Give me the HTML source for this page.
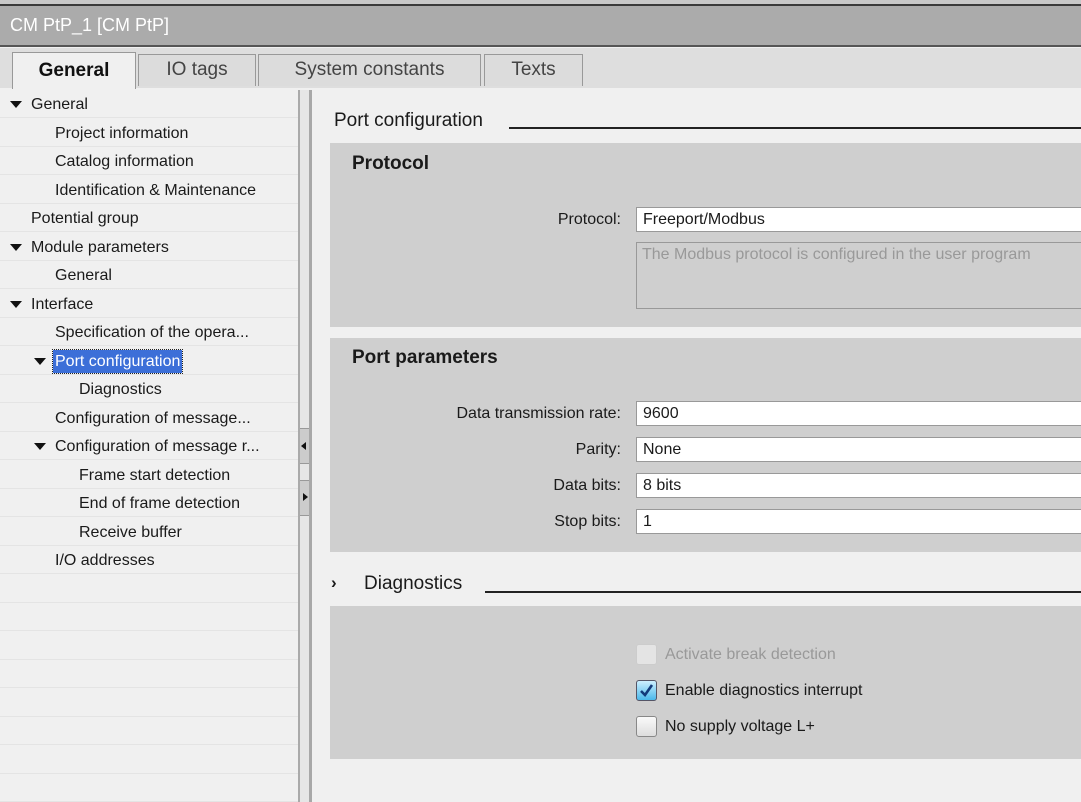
<!DOCTYPE html>
<html><head><style>
*{margin:0;padding:0;box-sizing:border-box}
body{width:1081px;height:802px;overflow:hidden;background:#f0f0f0;font-family:"Liberation Sans","DejaVu Sans",sans-serif;position:relative;color:#1a1a1a}
.a{position:absolute}
.row{position:absolute;left:0;width:298px;height:28px;border-bottom:1px solid #e4e4e4;font-size:16px;line-height:30px;white-space:nowrap}
.tri{display:inline-block;width:0;height:0;border-left:6px solid transparent;border-right:6px solid transparent;border-top:7px solid #111;vertical-align:middle;position:absolute;top:11px}
.tab{position:absolute;top:54px;height:32px;border:1px solid #999;border-bottom:none;background:#dcdcdc;font-size:19px;line-height:30px;text-align:center;color:#444}
.lbl{position:absolute;font-size:16px;text-align:right;width:300px;left:321px}
.inp{position:absolute;left:636px;width:460px;height:25px;background:#fff;border:1px solid #999;font-size:16px;line-height:24px;padding-left:6px}
.cb{position:absolute;left:636px;width:21px;height:21px;border:1px solid #888;border-radius:3px;background:linear-gradient(#fafafa,#ddd)}
.ct{position:absolute;left:665px;font-size:16px}
</style></head><body>
<div class="a" style="left:0;top:0;width:1081px;height:6px;background:#c8c8c8;border-bottom:2px solid #3a3a3a"></div>
<div class="a" style="left:0;top:6px;width:1081px;height:41px;background:#ababab;border-bottom:2px solid #555"></div>
<div class="a" style="left:10px;top:15px;font-size:18px;color:#fff">CM PtP_1 [CM PtP]</div>
<div class="a" style="left:0;top:48px;width:1081px;height:40px;background:#dedede"></div>
<div class="tab" style="left:12px;width:124px;top:52px;height:37px;background:#f0f0f0;color:#111;font-weight:bold;line-height:35px">General</div>
<div class="tab" style="left:138px;width:118px">IO tags</div>
<div class="tab" style="left:258px;width:223px">System constants</div>
<div class="tab" style="left:484px;width:99px">Texts</div>

<div class="row" style="top:90px"><span class="tri" style="left:10px"></span><span style="position:absolute;left:31px">General</span></div>
<div class="row" style="top:118.5px"><span style="position:absolute;left:55px">Project information</span></div>
<div class="row" style="top:147px"><span style="position:absolute;left:55px">Catalog information</span></div>
<div class="row" style="top:175.5px"><span style="position:absolute;left:55px">Identification &amp; Maintenance</span></div>
<div class="row" style="top:204px"><span style="position:absolute;left:31px">Potential group</span></div>
<div class="row" style="top:232.5px"><span class="tri" style="left:10px"></span><span style="position:absolute;left:31px">Module parameters</span></div>
<div class="row" style="top:261px"><span style="position:absolute;left:55px">General</span></div>
<div class="row" style="top:289.5px"><span class="tri" style="left:10px"></span><span style="position:absolute;left:31px">Interface</span></div>
<div class="row" style="top:318px"><span style="position:absolute;left:55px">Specification of the opera...</span></div>
<div class="row" style="top:346.5px"><span class="tri" style="left:34px"></span><span style="position:absolute;left:53px;top:3px;height:23px;line-height:23px;padding:0 2px;background:#3c6fd8;color:#fff;outline:1px dotted #222">Port configuration</span></div>
<div class="row" style="top:375px"><span style="position:absolute;left:79px">Diagnostics</span></div>
<div class="row" style="top:403.5px"><span style="position:absolute;left:55px">Configuration of message...</span></div>
<div class="row" style="top:432px"><span class="tri" style="left:34px"></span><span style="position:absolute;left:55px">Configuration of message r...</span></div>
<div class="row" style="top:460.5px"><span style="position:absolute;left:79px">Frame start detection</span></div>
<div class="row" style="top:489px"><span style="position:absolute;left:79px">End of frame detection</span></div>
<div class="row" style="top:517.5px"><span style="position:absolute;left:79px">Receive buffer</span></div>
<div class="row" style="top:546px"><span style="position:absolute;left:55px">I/O addresses</span></div>
<div class="row" style="top:574.5px"></div><div class="row" style="top:603px"></div><div class="row" style="top:631.5px"></div><div class="row" style="top:660px"></div><div class="row" style="top:688.5px"></div><div class="row" style="top:717px"></div><div class="row" style="top:745.5px"></div><div class="row" style="top:774px"></div>

<div class="a" style="left:298px;top:90px;width:2px;height:712px;background:#aaa"></div>
<div class="a" style="left:300px;top:90px;width:9px;height:712px;background:#e6e6e6"></div>
<div class="a" style="left:300px;top:428px;width:9px;height:36px;background:#ccc;border-top:1px solid #999;border-bottom:1px solid #999"></div>
<div class="a" style="left:301px;top:442px;width:0;height:0;border-top:4px solid transparent;border-bottom:4px solid transparent;border-right:5px solid #111"></div>
<div class="a" style="left:300px;top:480px;width:9px;height:36px;background:#ccc;border-top:1px solid #999;border-bottom:1px solid #999"></div>
<div class="a" style="left:303px;top:493px;width:0;height:0;border-top:4px solid transparent;border-bottom:4px solid transparent;border-left:5px solid #111"></div>
<div class="a" style="left:309px;top:90px;width:3px;height:712px;background:#a8a8a8"></div>

<div class="a" style="left:334px;top:110px;font-size:19px">Port configuration</div>
<div class="a" style="left:509px;top:127px;width:572px;height:2px;background:#222"></div>
<div class="a" style="left:330px;top:143px;width:751px;height:184px;background:#cfcfcf"></div>
<div class="a" style="left:352px;top:153px;font-size:19px;font-weight:bold">Protocol</div>
<div class="lbl" style="top:211px">Protocol:</div>
<div class="inp" style="top:207px">Freeport/Modbus</div>
<div class="a" style="left:636px;top:242px;width:460px;height:67px;border:1px solid #999;font-size:16px;color:#999;padding:3px 5px">The Modbus protocol is configured in the user program</div>

<div class="a" style="left:330px;top:338px;width:751px;height:214px;background:#cfcfcf"></div>
<div class="a" style="left:352px;top:347px;font-size:19px;font-weight:bold">Port parameters</div>
<div class="lbl" style="top:405px">Data transmission rate:</div><div class="inp" style="top:401px">9600</div>
<div class="lbl" style="top:441px">Parity:</div><div class="inp" style="top:437px">None</div>
<div class="lbl" style="top:477px">Data bits:</div><div class="inp" style="top:473px">8 bits</div>
<div class="lbl" style="top:513px">Stop bits:</div><div class="inp" style="top:509px">1</div>

<div class="a" style="left:331px;top:573px;font-size:17px;font-weight:bold">›</div>
<div class="a" style="left:364px;top:573px;font-size:19px">Diagnostics</div>
<div class="a" style="left:485px;top:591px;width:596px;height:2px;background:#222"></div>
<div class="a" style="left:330px;top:606px;width:751px;height:153px;background:#cfcfcf"></div>
<div class="cb" style="top:644px;border-color:#ccc;background:#e4e4e4"></div><div class="ct" style="top:646px;color:#999">Activate break detection</div>
<div class="cb" style="top:680px;background:linear-gradient(#cdefff,#4ab8ea);border-color:#556"><svg width="19" height="19" style="position:absolute;left:0;top:0"><path d="M4 10 L8 14 L15 4" stroke="#123a7a" stroke-width="2.6" fill="none"/></svg></div><div class="ct" style="top:682px">Enable diagnostics interrupt</div>
<div class="cb" style="top:716px"></div><div class="ct" style="top:718px">No supply voltage L+</div>
</body></html>
